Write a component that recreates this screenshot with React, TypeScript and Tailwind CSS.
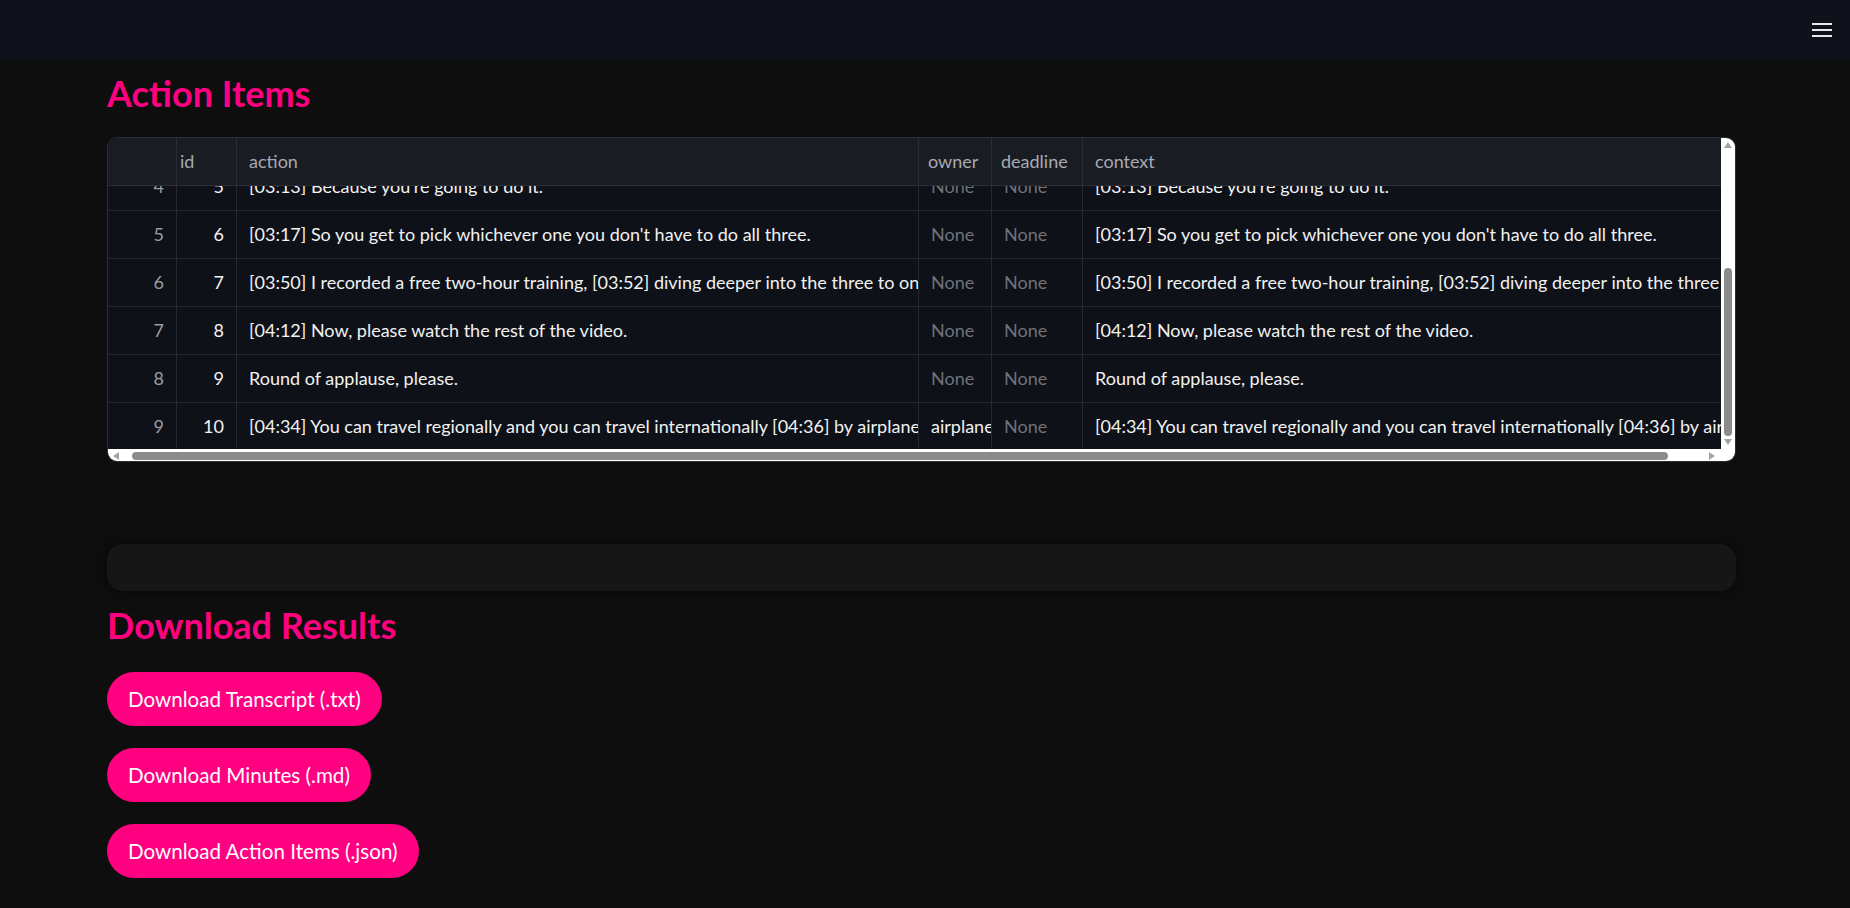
import React from "react";

type Row = {
  i: number;
  id: number;
  action: string;
  owner: string;
  deadline: string;
  context: string;
};

const rows: Row[] = [
  {
    i: 4,
    id: 5,
    action: "[03:13] Because you're going to do it.",
    owner: "None",
    deadline: "None",
    context: "[03:13] Because you're going to do it.",
  },
  {
    i: 5,
    id: 6,
    action: "[03:17] So you get to pick whichever one you don't have to do all three.",
    owner: "None",
    deadline: "None",
    context: "[03:17] So you get to pick whichever one you don't have to do all three.",
  },
  {
    i: 6,
    id: 7,
    action:
      "[03:50] I recorded a free two-hour training, [03:52] diving deeper into the three to one",
    owner: "None",
    deadline: "None",
    context:
      "[03:50] I recorded a free two-hour training, [03:52] diving deeper into the three to one",
  },
  {
    i: 7,
    id: 8,
    action: "[04:12] Now, please watch the rest of the video.",
    owner: "None",
    deadline: "None",
    context: "[04:12] Now, please watch the rest of the video.",
  },
  {
    i: 8,
    id: 9,
    action: "Round of applause, please.",
    owner: "None",
    deadline: "None",
    context: "Round of applause, please.",
  },
  {
    i: 9,
    id: 10,
    action:
      "[04:34] You can travel regionally and you can travel internationally [04:36] by airplane",
    owner: "airplane",
    deadline: "None",
    context:
      "[04:34] You can travel regionally and you can travel internationally [04:36] by airplane",
  },
];

function Cell({
  w,
  children,
  align = "left",
  muted = false,
  dim = false,
  last = false,
}: {
  w: string;
  children: React.ReactNode;
  align?: "left" | "right";
  muted?: boolean;
  dim?: boolean;
  last?: boolean;
}) {
  return (
    <div
      className={
        "flex h-full shrink-0 items-center overflow-hidden whitespace-nowrap " +
        w +
        (align === "right" ? " justify-end pr-[12px]" : " justify-start pl-[12px]") +
        (last ? "" : " border-r border-[#262932]") +
        (muted ? " text-[#9a9ca3]" : dim ? " text-[#6f727a]" : " text-[#f2f2f2]")
      }
    >
      <span>{children}</span>
    </div>
  );
}

function Triangle({ dir }: { dir: "up" | "down" | "left" | "right" }) {
  const pts =
    dir === "up"
      ? "0,7 4,1 8,7"
      : dir === "down"
      ? "0,1 8,1 4,7"
      : dir === "left"
      ? "7,0 7,8 1,4"
      : "1,0 1,8 7,4";
  return (
    <svg width="8" height="8" viewBox="0 0 8 8">
      <polygon points={pts} fill="#a3a3a3" />
    </svg>
  );
}

function Table() {
  return (
    <div className="flex h-[325px] w-[1629px] overflow-hidden rounded-[10px] border border-[#2a2d36] bg-[#0e1118] text-[18px]">
      <div className="flex min-w-0 flex-1 flex-col">
        {/* header */}
        <div className="flex h-[48px] shrink-0 border-b border-[#2c2f38] bg-[#1a1c24] text-[#a7aab2]">
          <div className="h-full w-[69px] shrink-0 border-r border-[#2a2d36]" />
          <div className="flex h-full w-[60px] shrink-0 items-center border-r border-[#2a2d36] pl-[3px]">
            id
          </div>
          <div className="flex h-full w-[682px] shrink-0 items-center border-r border-[#2a2d36] pl-[12px]">
            action
          </div>
          <div className="flex h-full w-[73px] shrink-0 items-center border-r border-[#2a2d36] pl-[9px]">
            owner
          </div>
          <div className="flex h-full w-[91px] shrink-0 items-center border-r border-[#2a2d36] pl-[9px]">
            deadline
          </div>
          <div className="flex h-full flex-1 items-center pl-[12px]">context</div>
        </div>
        {/* body */}
        <div className="h-[263px] shrink-0 overflow-hidden">
          <div className="-mt-[23px] flex flex-col">
            {rows.map((r) => (
              <div
                key={r.i}
                className="flex h-[48px] shrink-0 border-b border-[#23262e]"
              >
                <Cell w="w-[69px]" align="right" muted>
                  {r.i}
                </Cell>
                <Cell w="w-[60px]" align="right">
                  {r.id}
                </Cell>
                <Cell w="w-[682px]">{r.action}</Cell>
                <Cell w="w-[73px]" dim={r.owner === "None"}>
                  {r.owner}
                </Cell>
                <Cell w="w-[91px]" dim>
                  {r.deadline}
                </Cell>
                <Cell w="w-[760px]" last>
                  {r.context}
                </Cell>
              </div>
            ))}
          </div>
        </div>
        {/* horizontal scrollbar */}
        <div className="flex h-[13px] shrink-0 items-center bg-white pl-[4px] pr-[5px]">
          <Triangle dir="left" />
          <div className="ml-[12px] flex-1 pr-[40px]">
            <div className="h-[8px] rounded-full bg-[#8c8c8c]" />
          </div>
          <Triangle dir="right" />
        </div>
      </div>
      {/* vertical scrollbar */}
      <div className="flex w-[14px] shrink-0 flex-col items-center bg-white pt-[3px]">
        <Triangle dir="up" />
        <div className="mt-[119px] h-[168px] w-[8px] rounded-full bg-[#8c8c8c]" />
        <div className="mt-[2px]">
          <Triangle dir="down" />
        </div>
      </div>
    </div>
  );
}

function PinkButton({ children }: { children: React.ReactNode }) {
  return (
    <button className="flex h-[54px] items-center rounded-full bg-[#ff0080] px-[21px] text-[20.6px] text-white">
      {children}
    </button>
  );
}

export default function App() {
  return (
    <div className="min-h-[908px] bg-[#0e0e0e] [font-family:Lato,sans-serif] text-[16px]">
      <header className="flex h-[60px] items-center justify-end bg-[#0f121b] pr-[18px]">
        <svg width="20" height="16" viewBox="0 0 20 16">
          <rect x="0" y="1" width="20" height="2" fill="#e8e8e8" />
          <rect x="0" y="7" width="20" height="2" fill="#e8e8e8" />
          <rect x="0" y="13" width="20" height="2" fill="#e8e8e8" />
        </svg>
      </header>
      <main className="flex flex-col pl-[107px] pb-[30px]">
        <h2 className="mt-[11px] text-[36px] font-bold leading-[44px] text-[#ff0080]">
          Action Items
        </h2>
        <div className="mt-[22px]">
          <Table />
        </div>
        <div className="mt-[82px] h-[47px] w-[1629px] rounded-[16px] bg-[#161616] shadow-[0_0_18px_rgba(0,0,0,0.6)]" />
        <h2 className="mt-[12px] text-[36px] font-bold leading-[44px] text-[#ff0080]">
          Download Results
        </h2>
        <div className="mt-[25px] flex flex-col items-start gap-[22px]">
          <PinkButton>Download Transcript (.txt)</PinkButton>
          <PinkButton>Download Minutes (.md)</PinkButton>
          <PinkButton>Download Action Items (.json)</PinkButton>
        </div>
      </main>
    </div>
  );
}
